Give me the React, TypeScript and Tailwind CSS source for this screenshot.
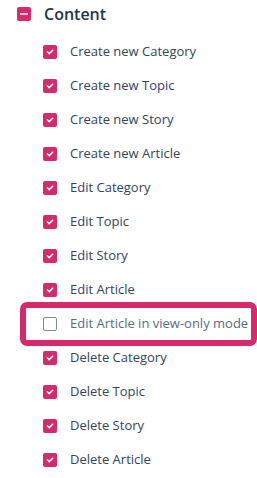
const items = [
  { label: "Create new Category", checked: true },
  { label: "Create new Topic", checked: true },
  { label: "Create new Story", checked: true },
  { label: "Create new Article", checked: true },
  { label: "Edit Category", checked: true },
  { label: "Edit Topic", checked: true },
  { label: "Edit Story", checked: true },
  { label: "Edit Article", checked: true },
  { label: "Edit Article in view-only mode", checked: false, highlight: true },
  { label: "Delete Category", checked: true },
  { label: "Delete Topic", checked: true },
  { label: "Delete Story", checked: true },
  { label: "Delete Article", checked: true },
];

function Checkbox({ checked }: { checked: boolean }) {
  if (!checked) {
    return <span className="w-[14px] h-[14px] rounded-[2px] border border-[#7f8b9c] bg-white shrink-0" />;
  }
  return (
    <span className="w-[14px] h-[14px] rounded-[2px] bg-[#d72a6a] shrink-0 flex items-center justify-center">
      <svg width="10" height="10" viewBox="0 0 10 10" fill="none">
        <polyline points="2.3,4.8 4.2,6.6 7.7,3.3" stroke="white" strokeWidth="1.5" strokeLinecap="round" strokeLinejoin="round" />
      </svg>
    </span>
  );
}

export default function App() {
  return (
    <div className="w-[257px] h-[478px] bg-white overflow-hidden" style={{ fontFamily: '"Open Sans", sans-serif' }}>
      {/* Group header */}
      <div className="h-[28px] flex items-center pl-[17px] gap-[13px]">
        <span className="w-[14px] h-[14px] rounded-[2px] bg-[#d72a6a] flex items-center justify-center">
          <span className="w-[8px] h-[2px] bg-[#f4c2d4]" />
        </span>
        <span className="text-[16px] font-semibold text-[#26344a]">Content</span>
      </div>

      {/* Permission list */}
      <div className="mt-[7px] flex flex-col">
        {items.map((item) => (
          <div
            key={item.label}
            className={
              item.highlight
                ? "h-[34px] ml-[25px] mr-[5px] pl-[18px] flex items-center gap-[13px] rounded-[2px] outline-[6px] outline-solid outline-offset-[-1px] outline-[#d72a6a]"
                : "h-[34px] pl-[43px] flex items-center gap-[13px]"
            }
          >
            <Checkbox checked={item.checked} />
            <span className={item.highlight ? "text-[13px] text-[#5a6b82]" : "text-[13px] text-[#34445a]"}>
              {item.label}
            </span>
          </div>
        ))}
      </div>
    </div>
  );
}
